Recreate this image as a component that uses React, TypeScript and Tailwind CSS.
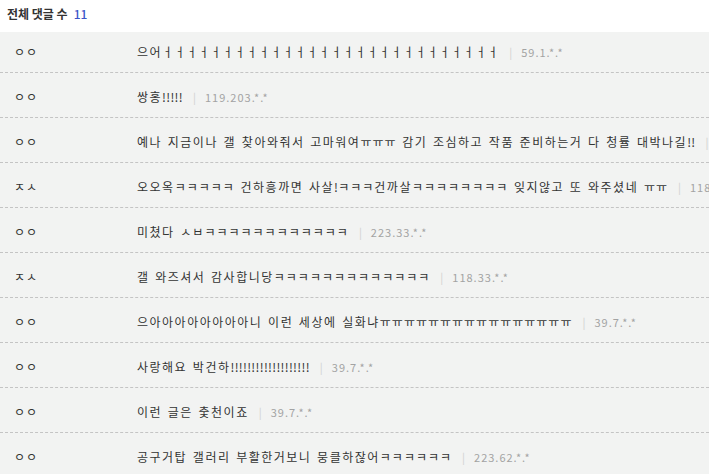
const comments = [
  { nick: 'ㅇㅇ', text: '으어' + 'ㅓ'.repeat(28), ip: '59.1.*.*' },
  { nick: 'ㅇㅇ', text: '쌍홍!!!!!', ip: '119.203.*.*' },
  {
    nick: 'ㅇㅇ',
    text: '예나 지금이나 갤 찾아와줘서 고마워여ㅠㅠㅠ 감기 조심하고 작품 준비하는거 다 청률 대박나길!!',
    ip: '211.36.*.*',
  },
  {
    nick: 'ㅈㅅ',
    text: '오오옥ㅋㅋㅋㅋㅋ 건하흥까면 사살!ㅋㅋㅋ건까살ㅋㅋㅋㅋㅋㅋㅋㅋ 잊지않고 또 와주셨네 ㅠㅠ',
    ip: '118.33.*.*',
  },
  { nick: 'ㅇㅇ', text: '미쳤다 ㅅㅂ' + 'ㅋ'.repeat(12), ip: '223.33.*.*' },
  { nick: 'ㅈㅅ', text: '갤 와즈셔서 감사합니당' + 'ㅋ'.repeat(13), ip: '118.33.*.*' },
  { nick: 'ㅇㅇ', text: '으아아아아아아아아니 이런 세상에 실화냐' + 'ㅠ'.repeat(16), ip: '39.7.*.*' },
  { nick: 'ㅇㅇ', text: '사랑해요 박건하' + '!'.repeat(19), ip: '39.7.*.*' },
  { nick: 'ㅇㅇ', text: '이런 글은 춫천이죠', ip: '39.7.*.*' },
  { nick: 'ㅇㅇ', text: '공구거탑 갤러리 부활한거보니 뭉클하잖어ㅋㅋㅋㅋㅋㅋ', ip: '223.62.*.*' },
];

// jamo and "!" are narrower in the reference font than syllables
function CommentText({ text }: { text: string }) {
  const parts = text.split(/([\u3131-\u318E]+|!+)/).filter(Boolean);
  return (
    <span className="shrink-0 leading-[16px] tracking-[1.5px] [word-spacing:1.5px]">
      {parts.map((p, i) =>
        /^[\u3131-\u318E]+$/.test(p) ? (
          <span key={i} className="tracking-[1px]">{p}</span>
        ) : p.startsWith('!') ? (
          <span key={i} className="tracking-[0.3px]">{p}</span>
        ) : (
          <span key={i}>{p}</span>
        )
      )}
    </span>
  );
}

export default function App() {
  return (
    <div className="w-[709px] h-[474px] overflow-hidden bg-white font-['Noto_Sans_CJK_KR','Noto_Sans',sans-serif] text-[12px] text-[#333]">
      <div className="h-[32px] flex items-center pl-[7px] pb-[4px]">
        <span className="font-bold text-[#333]">전체 댓글 수</span>
        <span className="ml-[6px] text-[#3b55c8] font-medium">11</span>
      </div>
      <ul className="bg-[#f2f3f2]">
        {comments.map((c, i) => (
          <li
            key={i}
            className={`flex items-center whitespace-nowrap overflow-hidden border-b border-dashed border-[#c4c4c4] ${
              i === 0 ? 'h-[41px]' : 'h-[45px] pt-[4px]'
            }`}
          >
            <span className="w-[137px] shrink-0 pl-[14px] leading-[16px] tracking-[1px]">{c.nick}</span>
            <CommentText text={c.text} />
            <span className="shrink-0 ml-[10px] text-[#d0d0d0] text-[11px]">|</span>
            <span className="shrink-0 ml-[9px] text-[#a3a3a3] text-[11px] tracking-[1px]">{c.ip}</span>
          </li>
        ))}
      </ul>
    </div>
  );
}
